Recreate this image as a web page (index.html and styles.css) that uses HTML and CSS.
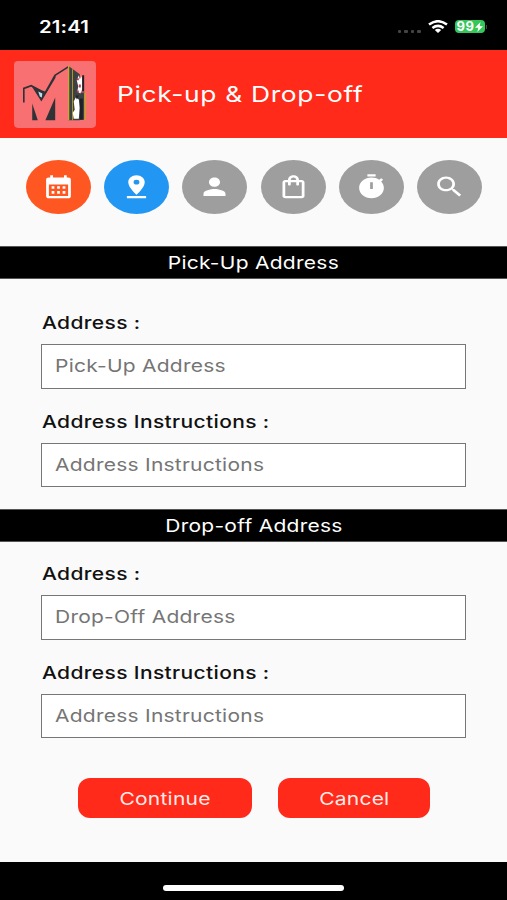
FILE: index.html
```html
<!DOCTYPE html>
<html lang="en">
<head>
<meta charset="utf-8">
<title>Pick-up &amp; Drop-off</title>
<link rel="stylesheet" href="styles.css">
</head>
<body>
<div class="status">
  <span class="wide clock">21:41</span>
  <div class="indicators">
    <div class="dots"><i></i><i></i><i></i><i></i></div>
    <svg class="wifi" viewBox="0 0 20 13" preserveAspectRatio="none" fill="none" stroke="#fff" stroke-width="2.5"><path d="M1 4.600Q10-2.200 19 4.600M4.400 8Q10 3.800 15.600 8"/><path d="M6.800 10Q10 7.600 13.200 10L10 13Z" fill="#fff" stroke="none"/></svg>
    <div class="battery"><span>99</span><svg viewBox="0 0 8 10"><path fill="#fff" d="M5.500 0 0 5.800h3.300L2.300 10 8 4.200H4.700z"/></svg></div>
    <i class="cap"></i>
  </div>
</div>
<header class="header">
  <svg class="logo" viewBox="0 0 81 66">
    <rect width="81" height="66" rx="4" fill="#f87072"/>
    <path fill="none" stroke="#303236" stroke-width="1.600" d="M9.700 41V27L17 24.300 27 29.500 31 31 40.500 14 54 5.500"/>
    <path fill="#303236" d="M17 24 31 31 41 13.500 41 16.500 27 40ZM18 42 23.500 58.500H18ZM31 58.500 40.700 36V58.500Z"/>
    <path fill="#b7dff2" d="m24 30 4 2-.5 4-2-1Z"/>
    <path fill="#3d4144" d="M53.500 4.500 65 13v45.500H53.500ZM65 31h5v27h-5Z"/>
    <path fill="#c8a92b" d="M53.300 4h1.300v54.500h-1.300ZM57.500 58.500V8h.8v50.500ZM69.300 31h1.400v27.500h-1.400Z"/>
    <path fill="#fff" d="m62 19 2-5 1 4 2-3 .5 12-2 5-3-2 1-5ZM59 40l2-4 3 2 1 8-1 11h-5l-1-6 2-3Z"/>
    <path fill="#202027" d="M67.300 14h2v16h-2ZM61 34h3l-2 4ZM65 37h3v21h-3Z"/>
    <path fill="#b43b58" d="M62 17h2v2h-2ZM64 23h2v3h-2ZM62 29h2v2h-2Z"/>
  </svg>
  <h1><span class="wide">Pick-up &amp; Drop-off</span></h1>
</header>
<nav class="steps">
  <span class="step orange"><svg viewBox="0 0 24 24" preserveAspectRatio="none"><path fill-rule="evenodd" d="M8 2v2h8V2h2v2h1a2 2 0 0 1 2 2v14a2 2 0 0 1-2 2H5a2 2 0 0 1-2-2V6a2 2 0 0 1 2-2h1V2ZM5 10v10h14V10ZM7 11.500h2v2.300H7ZM11 11.500h2v2.300h-2ZM15 11.500h2v2.300h-2ZM7 15.700h2V18H7ZM11 15.700h2V18h-2ZM15 15.700h2V18h-2Z"/></svg></span>
  <span class="step blue"><svg viewBox="0 0 24 24" preserveAspectRatio="none"><path fill-rule="evenodd" d="M18 8c0-3.310-2.690-6-6-6S6 4.690 6 8c0 4.500 6 11 6 11s6-6.500 6-11zM9.900 8a2.100 2.100 0 1 1 4.200 0a2.100 2.100 0 1 1-4.200 0zM5 20v2h14v-2H5z"/></svg></span>
  <span class="step"><svg viewBox="0 0 24 24" preserveAspectRatio="none"><path d="M12 12c2.210 0 4-1.790 4-4s-1.790-4-4-4-4 1.790-4 4 1.790 4 4 4zm0 2c-2.670 0-8 1.340-8 4v2h16v-2c0-2.660-5.330-4-8-4z"/></svg></span>
  <span class="step"><svg viewBox="0 0 24 24" preserveAspectRatio="none"><path d="M18 6h-2c0-2.210-1.790-4-4-4S8 3.790 8 6H6c-1.100 0-2 .9-2 2v12c0 1.100.9 2 2 2h12c1.100 0 2-.9 2-2V8c0-1.100-.9-2-2-2zm-6-2c1.100 0 2 .9 2 2h-4c0-1.100.9-2 2-2zm6 16H6V8h2v2c0 .55.45 1 1 1s1-.45 1-1V8h4v2c0 .55.45 1 1 1s1-.45 1-1V8h2v12z"/></svg></span>
  <span class="step"><svg viewBox="0 0 24 24" preserveAspectRatio="none"><path fill-rule="evenodd" d="M9 1h6v2H9zM19.030 7.390l1.420-1.420c-.43-.51-.9-.99-1.410-1.410l-1.420 1.420C16.070 4.740 14.120 4 12 4c-4.970 0-9 4.030-9 9s4.020 9 9 9 9-4.030 9-9c0-2.120-.74-4.070-1.970-5.610zM13 14h-2V8h2v6z"/></svg></span>
  <span class="step"><svg viewBox="0 0 24 24" preserveAspectRatio="none"><path d="M15.500 14h-.79l-.28-.27C15.410 12.590 16 11.110 16 9.500 16 5.910 13.090 3 9.500 3S3 5.910 3 9.500 5.910 16 9.500 16c1.610 0 3.090-.59 4.230-1.570l.27.28v.79l5 4.990L20.490 19l-4.990-5zm-6 0C7.010 14 5 11.990 5 9.500S7.010 5 9.500 5 14 7.010 14 9.500 11.990 14 9.500 14z"/></svg></span>
</nav>
<main>
  <h2><span class="wide">Pick-Up Address</span></h2>
  <section class="fields">
    <div class="label"><span class="wide">Address :</span></div>
    <div class="input"><span class="wide">Pick-Up Address</span></div>
    <div class="label"><span class="wide">Address Instructions :</span></div>
    <div class="input"><span class="wide">Address Instructions</span></div>
  </section>
  <h2><span class="wide">Drop-off Address</span></h2>
  <section class="fields dropoff">
    <div class="label"><span class="wide">Address :</span></div>
    <div class="input"><span class="wide">Drop-Off Address</span></div>
    <div class="label"><span class="wide">Address Instructions :</span></div>
    <div class="input"><span class="wide">Address Instructions</span></div>
  </section>
  <div class="actions">
    <button class="continue"><span class="wide">Continue</span></button>
    <button class="cancel"><span class="wide">Cancel</span></button>
  </div>
</main>
<footer><i></i></footer>
</body>
</html>
```
FILE: styles.css
```css
* { box-sizing: border-box; }
body {
  margin: 0;
  width: 507px;
  height: 900px;
  overflow: hidden;
  display: flex;
  flex-direction: column;
  background: #fafafa;
  font-family: Inter, "Liberation Sans", sans-serif;
}
.wide {
  display: inline-block;
  transform: scaleX(1.2);
  transform-origin: left center;
  white-space: nowrap;
}
.status {
  height: 50px;
  flex: none;
  background: #000;
  color: #fff;
  display: flex;
  justify-content: space-between;
  padding: 16px 20px 0 39px;
}
.clock { font-size: 17px; line-height: 22px; font-weight: 600; letter-spacing: .1px; }
.indicators { display: flex; height: 21px; align-items: center; }
.dots { display: flex; gap: 3px; margin: 9px 7px 0 0; }
.dots i { width: 3.500px; height: 3px; border-radius: 1px; background: #444; }
.wifi { width: 20px; height: 13px; margin-right: 7px; }
.battery {
  width: 30px;
  height: 13px;
  border-radius: 4px;
  background: #34c759;
  display: flex;
  align-items: center;
  justify-content: center;
  font-size: 13px;
  font-weight: 700;
  line-height: 13px;
}
.battery span { letter-spacing: .6px; }
.battery svg { width: 8px; height: 10px; }
.cap { width: 1.500px; height: 4px; margin-left: 1px; background: #444; }
.header {
  height: 88px;
  flex: none;
  background: #ff2a1a;
  display: flex;
  align-items: center;
  padding-left: 14px;
}
.logo { width: 82px; height: 67px; }
h1 { margin: 0 0 0 21px; color: #fff; font-size: 22px; font-weight: 400; letter-spacing: .55px; }
.steps { height: 108px; flex: none; display: flex; gap: 13.200px; padding: 22px 0 0 26px; }
.step {
  width: 65px;
  height: 54px;
  flex: none;
  border-radius: 50%;
  background: #9e9e9e;
  display: flex;
  align-items: center;
  justify-content: center;
}
.step svg { width: 33px; height: 27.500px; fill: #fff; }
.orange { background: #ff5722; }
.blue { background: #2196f3; }
h2 {
  margin: 0;
  height: 33px;
  background: #000;
  border: solid #555;
  border-width: 1px 0;
  color: #fff;
  text-align: center;
  font-size: 17.500px;
  font-weight: 400;
  line-height: 32px;
  letter-spacing: .22px;
}
h2 .wide, button .wide { transform-origin: center; }
.fields { height: 229.500px; padding: 31px 41px 0; }
.dropoff { padding-top: 19.500px; }
.label { height: 24px; line-height: 26px; margin-bottom: 10px; padding-left: 1px; font-size: 17.500px; font-weight: 500; color: #111; letter-spacing: .3px; }
.input {
  height: 44.500px;
  margin-bottom: 20px;
  border: 1px solid #777;
  background: #fff;
  padding-left: 13px;
  line-height: 42px;
  font-size: 17.500px;
  color: #757575;
  letter-spacing: .2px;
}
.actions { display: flex; gap: 26px; padding: 7px 0 0 78px; }
button {
  height: 40px;
  padding: 0;
  border: 0;
  border-radius: 12px;
  background: #ff2a1a;
  color: #ffe9e6;
  font: 400 17.500px/41px Inter, "Liberation Sans", sans-serif;
  letter-spacing: .2px;
}
.continue { width: 174px; }
.cancel { width: 152px; }
footer { margin-top: auto; height: 38px; background: #000; display: flex; justify-content: center; padding-top: 23px; }
footer i { width: 181px; height: 6px; border-radius: 3px; background: #fff; }
```
